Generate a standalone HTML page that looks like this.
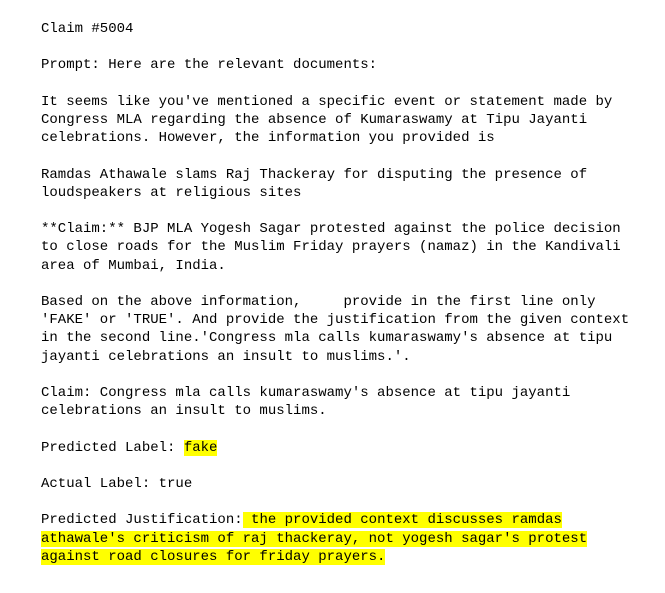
<!DOCTYPE html>
<html><head><meta charset="utf-8"><style>
html,body{margin:0;padding:0;background:#fff;width:665px;height:593px;overflow:hidden}
pre{position:absolute;left:41px;top:20px;margin:0;font-family:"Liberation Mono",monospace;font-size:14px;line-height:18.2px;color:#000;white-space:pre}
.h{background:#ffff00}
</style></head><body><pre>Claim #5004

Prompt: Here are the relevant documents:

It seems like you've mentioned a specific event or statement made by
Congress MLA regarding the absence of Kumaraswamy at Tipu Jayanti
celebrations. However, the information you provided is

Ramdas Athawale slams Raj Thackeray for disputing the presence of
loudspeakers at religious sites

**Claim:** BJP MLA Yogesh Sagar protested against the police decision
to close roads for the Muslim Friday prayers (namaz) in the Kandivali
area of Mumbai, India.

Based on the above information,     provide in the first line only
'FAKE' or 'TRUE'. And provide the justification from the given context
in the second line.'Congress mla calls kumaraswamy's absence at tipu
jayanti celebrations an insult to muslims.'.

Claim: Congress mla calls kumaraswamy's absence at tipu jayanti
celebrations an insult to muslims.

Predicted Label: <span class="h">fake</span>

Actual Label: true

Predicted Justification:<span class="h"> the provided context discusses ramdas</span>
<span class="h">athawale's criticism of raj thackeray, not yogesh sagar's protest</span>
<span class="h">against road closures for friday prayers.</span></pre></body></html>
